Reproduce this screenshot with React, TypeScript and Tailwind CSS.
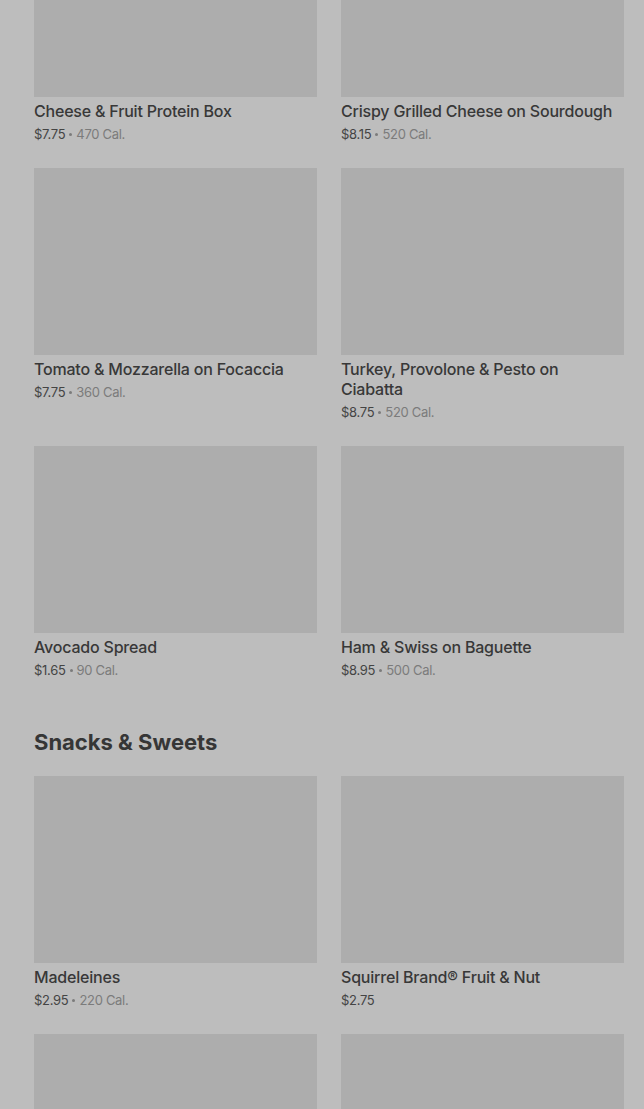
type Item = { name: string; price: string; cal?: string };

const rowsTop: Item[] = [
  { name: "Cheese & Fruit Protein Box", price: "$7.75", cal: "470 Cal." },
  { name: "Crispy Grilled Cheese on Sourdough", price: "$8.15", cal: "520 Cal." },
  { name: "Tomato & Mozzarella on Focaccia", price: "$7.75", cal: "360 Cal." },
  { name: "Turkey, Provolone & Pesto on Ciabatta", price: "$8.75", cal: "520 Cal." },
  { name: "Avocado Spread", price: "$1.65", cal: "90 Cal." },
  { name: "Ham & Swiss on Baguette", price: "$8.95", cal: "500 Cal." },
];

const snacks: Item[] = [
  { name: "Madeleines", price: "$2.95", cal: "220 Cal." },
  { name: "Squirrel Brand® Fruit & Nut", price: "$2.75" },
  { name: "", price: "" },
  { name: "", price: "" },
];

function Card({ item }: { item: Item }) {
  return (
    <div>
      <div className="h-[187px] bg-[#adadad]" />
      {item.name && (
        <>
          <p className="mt-1 text-[16px] leading-[20px] font-medium tracking-[-0.2px] text-[#383838]">{item.name}</p>
          <p className="mt-[3px] flex h-5 items-center text-[13px] leading-[20px] tracking-[-0.3px] text-[#444]">
            {item.price}
            {item.cal && (
              <span className="flex items-center text-[#7b7b7b]">
                <span className="mx-[4px] h-[3px] w-[3px] rounded-full bg-[#7b7b7b]" />
                {item.cal}
              </span>
            )}
          </p>
        </>
      )}
    </div>
  );
}

export default function App() {
  return (
    <div
      className="h-[1109px] overflow-hidden bg-[#bdbdbd] pl-[34px] pr-[20px]"
      style={{ fontFamily: "Inter, 'Noto Sans', sans-serif" }}
    >
      <div className="-mt-[90px] grid grid-cols-2 gap-x-6 gap-y-6">
        {rowsTop.map((it) => (
          <Card key={it.name} item={it} />
        ))}
      </div>
      <h2 className="mt-[48px] mb-[20px] text-[22px] leading-[28px] font-bold text-[#363636]">Snacks &amp; Sweets</h2>
      <div className="grid grid-cols-2 gap-x-6 gap-y-6">
        {snacks.map((it, i) => (
          <Card key={i} item={it} />
        ))}
      </div>
    </div>
  );
}
